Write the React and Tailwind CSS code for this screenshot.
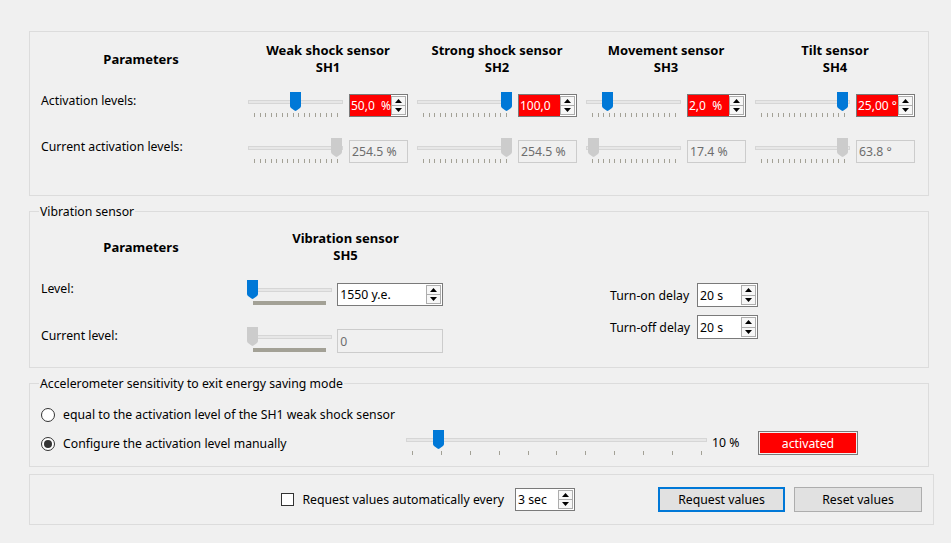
import React from "react";

const SENSORS = [
  { name: "Weak shock sensor", code: "SH1", value: "50,0  %", pos: 42, current: "254.5 %", curPos: 83 },
  { name: "Strong shock sensor", code: "SH2", value: "100,0", pos: 84, current: "254.5 %", curPos: 84 },
  { name: "Movement sensor", code: "SH3", value: "2,0  %", pos: 16, current: "17.4 %", curPos: 2 },
  { name: "Tilt sensor", code: "SH4", value: "25,00 °", pos: 82, current: "63.8 °", curPos: 82 },
];

function Handle({ on }) {
  return (
    <svg width="11" height="19" viewBox="0 0 11 19" className="block">
      <path
        d="M0 0H11V14Q11 15 10 16L6.5 18.5Q5.5 19.3 4.5 18.5L1 16Q0 15 0 14Z"
        fill={on ? "#0078d7" : "#cccccc"}
      />
    </svg>
  );
}

function Slider({ className, pos, on = true, ticks = 16, bar = false }) {
  return (
    <div className={`flex flex-col ${className}`}>
      <div className="relative h-[19px]">
        <div className="absolute left-0 right-0 top-[8px] h-[4px] border border-[#d6d6d6] bg-[#e7e7e7]" />
        <div className="absolute top-0" style={{ left: pos }}>
          <Handle on={on} />
        </div>
      </div>
      {bar ? (
        <div className="mt-[2px] ml-[6px] mr-[6px] h-[4px] bg-[#a3a196]" />
      ) : (
        <div className="mt-[2px] flex justify-between pl-[6px] pr-[5px]">
          {Array.from({ length: ticks }).map((_, i) => (
            <div key={i} className="w-px h-[4px] bg-[#a3a196]" />
          ))}
        </div>
      )}
    </div>
  );
}

function Arrow({ up }) {
  return (
    <svg width="7" height="4" viewBox="0 0 7 4" className="block">
      <path d={up ? "M0 4L3.5 0L7 4Z" : "M0 0L3.5 4L7 0Z"} fill="#000" />
    </svg>
  );
}

function SpinBox({ value, className, red = false }) {
  return (
    <div className={`flex border border-[#7a7a7a] bg-white ${className}`}>
      <div
        className={`flex-1 min-w-0 overflow-hidden whitespace-pre flex items-center ${
          red ? "bg-[#ff0000] text-white pl-px text-[12px]" : "text-black pl-[2px]"
        }`}
      >
        {value}
      </div>
      <div className="flex flex-col w-[16px] py-px pr-px">
        <div className="flex-1 flex items-center justify-center border border-[#adadad] bg-[#f7f7f7]">
          <Arrow up />
        </div>
        <div className="flex-1 flex items-center justify-center border border-t-0 border-[#adadad] bg-[#f7f7f7]">
          <Arrow />
        </div>
      </div>
    </div>
  );
}

function Field({ value, className }) {
  return (
    <div className={`flex items-center pl-[2px] border border-[#cccccc] bg-[#f0f0f0] text-[#6d6d6d] whitespace-pre ${className}`}>
      {value}
    </div>
  );
}

function Radio({ checked }) {
  return (
    <div className="w-[14px] h-[14px] rounded-full border border-[#333333] bg-white flex items-center justify-center shrink-0">
      {checked && <div className="w-[8px] h-[8px] rounded-full bg-[#333333]" />}
    </div>
  );
}

function GroupTitle({ children }) {
  return <div className="-mt-[9px] ml-[9px] px-px w-fit bg-[#f0f0f0]">{children}</div>;
}

export default function App() {
  return (
    <div className="w-[951px] h-[543px] overflow-hidden bg-[#f0f0f0] pl-[29px] pt-[31px] text-[12.25px] leading-[17px] text-black font-['Noto_Sans',sans-serif]">
      {/* ── Shock / movement / tilt sensors ─────────────────────────── */}
      <div className="w-[900px] h-[165px] border border-[#dcdcdc] pt-[10px]">
        <div className="flex h-[34px]">
          <div className="w-[218px] pl-[4px] flex items-center justify-center font-bold text-[13px]">Parameters</div>
          {SENSORS.map(s => (
            <div key={s.code} className="w-[169px]">
              <div className="w-[160px] text-center font-bold text-[13px]">
                <div>{s.name}</div>
                <div>{s.code}</div>
              </div>
            </div>
          ))}
        </div>

        <div className="mt-[16px] flex items-start">
          <div className="w-[218px] pl-[11px]">Activation levels:</div>
          {SENSORS.map(s => (
            <div key={s.code} className="w-[169px] flex items-start gap-[6px]">
              <Slider className="w-[95px]" pos={s.pos} />
              <SpinBox className="mt-[2px] w-[59px] h-[23px]" value={s.value} red />
            </div>
          ))}
        </div>

        <div className="mt-[21px] flex items-start">
          <div className="w-[218px] pl-[11px]">Current activation levels:</div>
          {SENSORS.map(s => (
            <div key={s.code} className="w-[169px] flex items-start gap-[6px]">
              <Slider className="w-[95px]" pos={s.curPos} on={false} />
              <Field className="mt-[2px] w-[59px] h-[23px]" value={s.current} />
            </div>
          ))}
        </div>
      </div>

      {/* ── Vibration sensor ─────────────────────────────────────────── */}
      <div className="mt-[15px] w-[900px] h-[157px] border border-[#dcdcdc]">
        <GroupTitle>Vibration sensor</GroupTitle>
        <div className="mt-[10px] flex h-[34px]">
          <div className="w-[218px] pl-[4px] flex items-center justify-center font-bold text-[13px]">Parameters</div>
          <div className="w-[195px] text-center font-bold text-[13px]">
            <div>Vibration sensor</div>
            <div>SH5</div>
          </div>
        </div>

        <div className="mt-[16px] flex items-start">
          <div className="w-[413px]">
            <div className="flex items-start">
              <div className="w-[218px] pl-[11px]">Level:</div>
              <Slider className="w-[85px]" pos={0} bar />
              <SpinBox className="ml-[5px] mt-[3px] w-[106px] h-[23px]" value="1550 y.e." />
            </div>
            <div className="mt-[21px] flex items-start">
              <div className="w-[218px] pl-[11px]">Current level:</div>
              <Slider className="w-[85px]" pos={0} on={false} bar />
              <Field className="ml-[5px] mt-[2px] w-[106px] h-[24px]" value="0" />
            </div>
          </div>

          <div className="ml-[167px] pt-[3px] flex flex-col gap-[8px]">
            <div className="flex items-center">
              <div className="w-[87px]">Turn-on delay</div>
              <SpinBox className="w-[61px] h-[24px]" value="20 s" />
            </div>
            <div className="flex items-center">
              <div className="w-[87px]">Turn-off delay</div>
              <SpinBox className="w-[61px] h-[24px]" value="20 s" />
            </div>
          </div>
        </div>
      </div>

      {/* ── Accelerometer ───────────────────────────────────────────── */}
      <div className="mt-[15px] w-[900px] h-[84px] border border-[#dcdcdc]">
        <GroupTitle>Accelerometer sensitivity to exit energy saving mode</GroupTitle>
        <div className="mt-[14px] pl-[11px] flex items-center gap-[8px]">
          <Radio />
          <span>equal to the activation level of the SH1 weak shock sensor</span>
        </div>
        <div className="mt-[7px] flex items-start">
          <div className="w-[376px] pl-[11px] mt-[5px] flex items-center gap-[8px]">
            <Radio checked />
            <span>Configure the activation level manually</span>
          </div>
          <Slider className="w-[301px]" pos={27} ticks={11} />
          <div className="ml-[5px] w-[46px] mt-[4px]">10 %</div>
          <div className="mt-px w-[100px] h-[24px] border border-[#7a7a7a] p-px">
            <div className="h-full bg-[#ff0000] text-white flex items-center justify-center">activated</div>
          </div>
        </div>
      </div>

      {/* ── Bottom bar ──────────────────────────────────────────────── */}
      <div className="mt-[7px] w-[905px] h-[51px] border border-[#dcdcdc] flex items-center justify-end pr-[11px]">
        <div className="w-[13px] h-[13px] border border-[#333333] bg-white" />
        <span className="ml-[8px]">Request values automatically every</span>
        <SpinBox className="ml-[11px] w-[60px] h-[23px]" value="3 sec" />
        <button className="ml-[83px] w-[127px] h-[25px] border-2 border-[#0078d7] bg-[#e1e1e1]">Request values</button>
        <button className="ml-[9px] w-[128px] h-[25px] border border-[#adadad] bg-[#e1e1e1]">Reset values</button>
      </div>
    </div>
  );
}
